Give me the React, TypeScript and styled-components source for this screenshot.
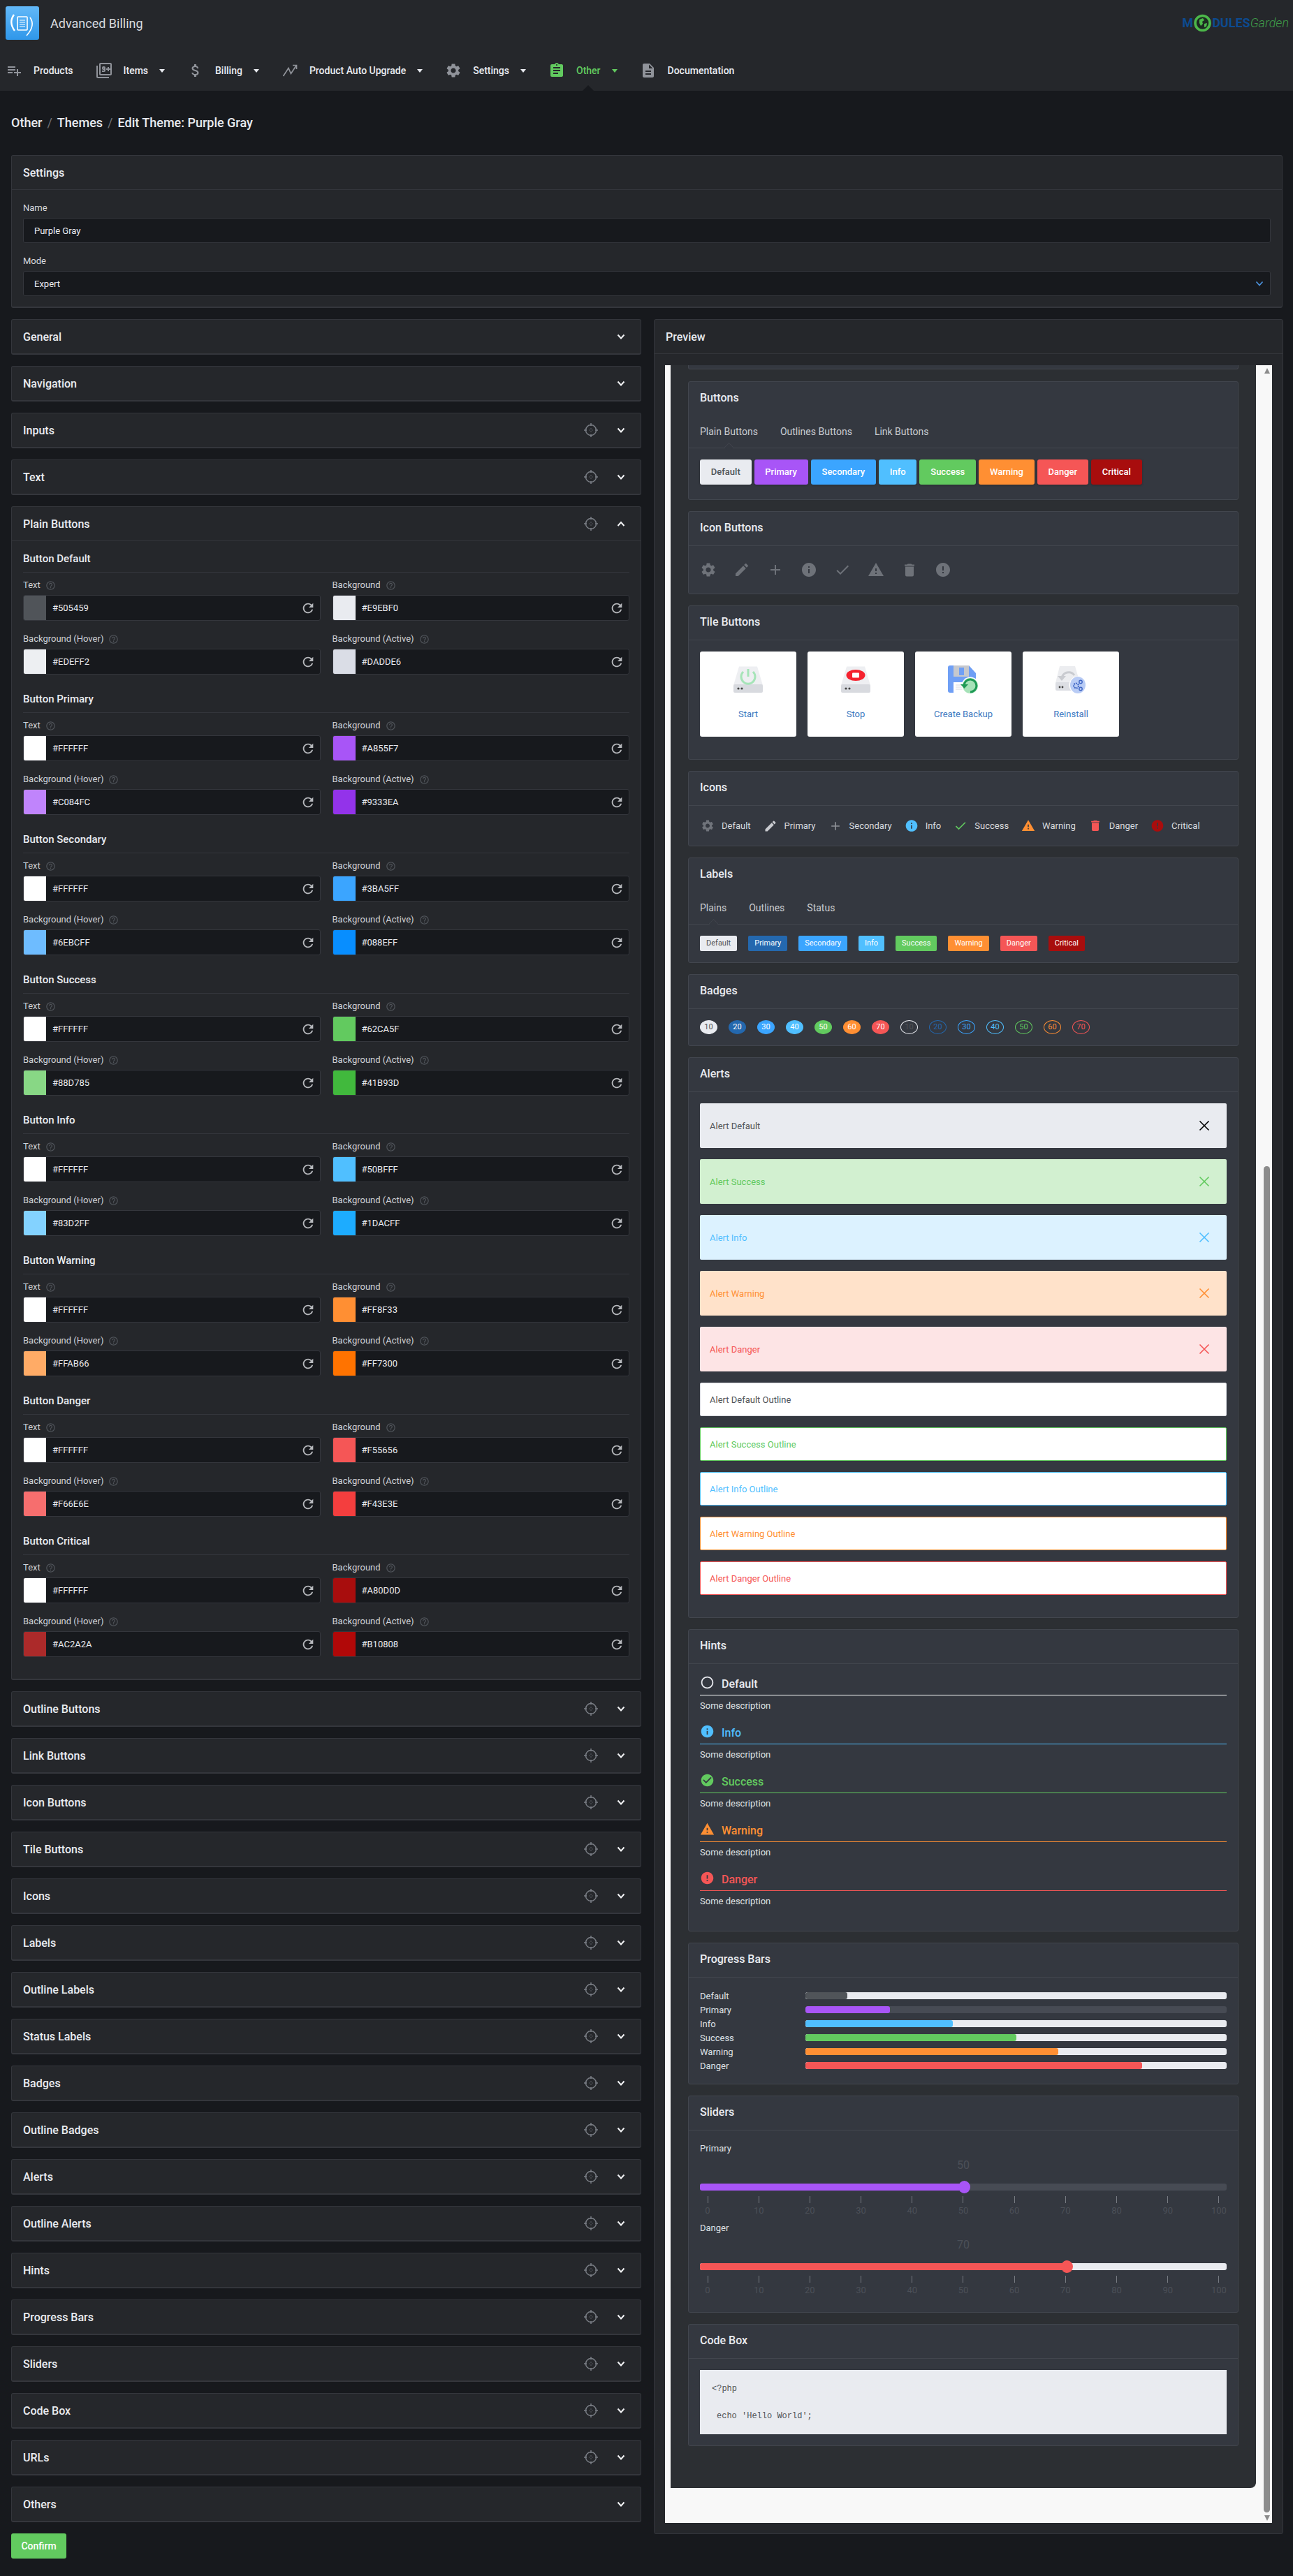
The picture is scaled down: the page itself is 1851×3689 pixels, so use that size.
import React from 'react';
import styled, { createGlobalStyle } from 'styled-components';
import {
  MdPlaylistAdd,
  MdOutlineFilter9Plus,
  MdAttachMoney,
  MdSettings,
  MdAssignment,
  MdDescription,
  MdRefresh,
  MdHelpOutline,
  MdEdit,
  MdAdd,
  MdInfo,
  MdCheck,
  MdWarning,
  MdDelete,
  MdError,
  MdCheckCircle,
  MdRadioButtonUnchecked,
} from 'react-icons/md';

const Color = {
  PAGE: '#17191d',
  PANEL: '#25272b',
  PANEL_LINE: '#34363c',
  DARK: '#2c2f33',
  CARD: '#343840',
  CARD_LINE: '#42464e',
  TEXT: '#e9ebf0',
  DEFAULT: '#e9ebf0',
  DEFAULT_TEXT: '#505459',
  PURPLE: '#a855f7',
  PRIMARY: '#2468ae',
  SECONDARY: '#3ba5ff',
  INFO: '#50bfff',
  SUCCESS: '#62ca5f',
  WARNING: '#ff8f33',
  DANGER: '#f55656',
  CRITICAL: '#a80d0d',
};

const GlobalStyle = createGlobalStyle`
  html, body {
    margin: 0;
    background: ${Color.PAGE};
    font-family: Roboto, "Liberation Sans", sans-serif;
    font-size: 13px;
    color: ${Color.TEXT};
  }
  * { box-sizing: border-box; }
`;

const UpgradeIcon = () => (
  <svg width="24" height="24" viewBox="0 0 24 24" fill="none">
    <path d="M2.500 20 10 8.500l3.500 8L21 5" stroke="currentColor" strokeWidth="1.700" />
    <path d="M16 4.500h5.500V10" stroke="currentColor" strokeWidth="1.700" />
  </svg>
);

const TargetGlyph = () => (
  <svg width="20" height="20" viewBox="0 0 20 20" fill="none" stroke="currentColor">
    <circle cx="10" cy="10" r="7.500" strokeWidth="1.500" />
    <path d="M10 0v4M10 16v4M0 10h4M16 10h4" strokeWidth="1.500" />
    <path d="M10 7.500v1M10 11.500v1M7.500 10h1M11.500 10h1" strokeWidth="1.200" />
  </svg>
);

const NAV = [
  { label: 'Products', icon: <MdPlaylistAdd size={26} />, caret: false },
  { label: 'Items', icon: <MdOutlineFilter9Plus size={26} />, caret: true },
  { label: 'Billing', icon: <MdAttachMoney size={24} />, caret: true },
  { label: 'Product Auto Upgrade', icon: <UpgradeIcon />, caret: true },
  { label: 'Settings', icon: <MdSettings size={24} />, caret: true },
  { label: 'Other', icon: <MdAssignment size={24} />, caret: true, active: true },
  { label: 'Documentation', icon: <MdDescription size={24} />, caret: false },
];

const BUTTON_GROUPS = [
  { title: 'Button Default', values: ['#505459', '#E9EBF0', '#EDEFF2', '#DADDE6'] },
  { title: 'Button Primary', values: ['#FFFFFF', '#A855F7', '#C084FC', '#9333EA'] },
  { title: 'Button Secondary', values: ['#FFFFFF', '#3BA5FF', '#6EBCFF', '#088EFF'] },
  { title: 'Button Success', values: ['#FFFFFF', '#62CA5F', '#88D785', '#41B93D'] },
  { title: 'Button Info', values: ['#FFFFFF', '#50BFFF', '#83D2FF', '#1DACFF'] },
  { title: 'Button Warning', values: ['#FFFFFF', '#FF8F33', '#FFAB66', '#FF7300'] },
  { title: 'Button Danger', values: ['#FFFFFF', '#F55656', '#F66E6E', '#F43E3E'] },
  { title: 'Button Critical', values: ['#FFFFFF', '#A80D0D', '#AC2A2A', '#B10808'] },
];

const FIELD_NAMES = ['Text', 'Background', 'Background (Hover)', 'Background (Active)'];

const PANELS_BEFORE = [
  { title: 'General', target: false },
  { title: 'Navigation', target: false },
  { title: 'Inputs', target: true },
  { title: 'Text', target: true },
];

const PANELS_AFTER = [
  'Outline Buttons',
  'Link Buttons',
  'Icon Buttons',
  'Tile Buttons',
  'Icons',
  'Labels',
  'Outline Labels',
  'Status Labels',
  'Badges',
  'Outline Badges',
  'Alerts',
  'Outline Alerts',
  'Hints',
  'Progress Bars',
  'Sliders',
  'Code Box',
  'URLs',
];

const PREVIEW_BUTTONS = [
  { label: 'Default', bg: Color.DEFAULT, fg: Color.DEFAULT_TEXT },
  { label: 'Primary', bg: Color.PURPLE, fg: '#fff' },
  { label: 'Secondary', bg: Color.SECONDARY, fg: '#fff' },
  { label: 'Info', bg: Color.INFO, fg: '#fff' },
  { label: 'Success', bg: Color.SUCCESS, fg: '#fff' },
  { label: 'Warning', bg: Color.WARNING, fg: '#fff' },
  { label: 'Danger', bg: Color.DANGER, fg: '#fff' },
  { label: 'Critical', bg: Color.CRITICAL, fg: '#fff' },
];

const PREVIEW_LABELS = [
  { label: 'Default', bg: Color.DEFAULT, fg: Color.DEFAULT_TEXT },
  { label: 'Primary', bg: Color.PRIMARY, fg: '#fff' },
  { label: 'Secondary', bg: Color.SECONDARY, fg: '#fff' },
  { label: 'Info', bg: Color.INFO, fg: '#fff' },
  { label: 'Success', bg: Color.SUCCESS, fg: '#fff' },
  { label: 'Warning', bg: Color.WARNING, fg: '#fff' },
  { label: 'Danger', bg: Color.DANGER, fg: '#fff' },
  { label: 'Critical', bg: Color.CRITICAL, fg: '#fff' },
];

const BADGES = [
  { value: 10, color: Color.DEFAULT, fg: Color.DEFAULT_TEXT },
  { value: 20, color: Color.PRIMARY, fg: '#fff' },
  { value: 30, color: Color.SECONDARY, fg: '#fff' },
  { value: 40, color: Color.INFO, fg: '#fff' },
  { value: 50, color: Color.SUCCESS, fg: '#fff' },
  { value: 60, color: Color.WARNING, fg: '#fff' },
  { value: 70, color: Color.DANGER, fg: '#fff' },
];

const OUTLINE_BADGES = [
  { value: 10, color: Color.DEFAULT, fg: Color.DEFAULT_TEXT },
  { value: 20, color: Color.PRIMARY, fg: Color.PRIMARY },
  { value: 30, color: Color.SECONDARY, fg: Color.SECONDARY },
  { value: 40, color: Color.INFO, fg: Color.INFO },
  { value: 50, color: Color.SUCCESS, fg: Color.SUCCESS },
  { value: 60, color: Color.WARNING, fg: Color.WARNING },
  { value: 70, color: Color.DANGER, fg: Color.DANGER },
];

const ALERTS = [
  { label: 'Alert Default', bg: '#e9ebf0', fg: Color.DEFAULT_TEXT, close: '#000' },
  { label: 'Alert Success', bg: '#d2f0d0', fg: Color.SUCCESS, close: Color.SUCCESS },
  { label: 'Alert Info', bg: '#dcf2ff', fg: Color.INFO, close: Color.INFO },
  { label: 'Alert Warning', bg: '#ffe2ca', fg: Color.WARNING, close: Color.WARNING },
  { label: 'Alert Danger', bg: '#fde4e5', fg: Color.DANGER, close: Color.DANGER },
];

const OUTLINE_ALERTS = [
  { label: 'Alert Default Outline', fg: Color.DEFAULT_TEXT, line: '#d6d8de' },
  { label: 'Alert Success Outline', fg: Color.SUCCESS, line: Color.SUCCESS },
  { label: 'Alert Info Outline', fg: Color.INFO, line: Color.INFO },
  { label: 'Alert Warning Outline', fg: Color.WARNING, line: Color.WARNING },
  { label: 'Alert Danger Outline', fg: Color.DANGER, line: Color.DANGER },
];

const HINTS = [
  { label: 'Default', color: '#e9ebf0', line: '#ffffff', icon: <MdRadioButtonUnchecked size={21} /> },
  { label: 'Info', color: Color.INFO, line: Color.INFO, icon: <MdInfo size={21} /> },
  { label: 'Success', color: Color.SUCCESS, line: Color.SUCCESS, icon: <MdCheckCircle size={21} /> },
  { label: 'Warning', color: Color.WARNING, line: Color.WARNING, icon: <MdWarning size={21} /> },
  { label: 'Danger', color: Color.DANGER, line: Color.DANGER, icon: <MdError size={21} /> },
];

const PROGRESS = [
  { label: 'Default', value: 10, color: Color.DEFAULT_TEXT, track: Color.DEFAULT },
  { label: 'Primary', value: 20, color: Color.PURPLE, track: '#474b54' },
  { label: 'Info', value: 35, color: Color.INFO, track: Color.DEFAULT },
  { label: 'Success', value: 50, color: Color.SUCCESS, track: Color.DEFAULT },
  { label: 'Warning', value: 60, color: Color.WARNING, track: Color.DEFAULT },
  { label: 'Danger', value: 80, color: Color.DANGER, track: Color.DEFAULT },
];

const SLIDERS = [
  { label: 'Primary', value: 50, color: Color.PURPLE, track: '#474b54' },
  { label: 'Danger', value: 70, color: Color.DANGER, track: Color.DEFAULT },
];

const TICKS = [0, 10, 20, 30, 40, 50, 60, 70, 80, 90, 100];

const Chevron = ({ up }: { up?: boolean }) => (
  <svg width="14" height="10" viewBox="0 0 14 10" fill="none">
    <path
      d={up ? 'M2.5 8 7 3l4.5 5' : 'M2.5 2.5 7 7.5l4.5-5'}
      stroke="#f2f3f5"
      strokeWidth="2"
    />
  </svg>
);

const CloseIcon = ({ color }: { color: string }) => (
  <svg width="16" height="16" viewBox="0 0 16 16" fill="none">
    <path d="M1.5 1.5l13 13M14.5 1.5l-13 13" stroke={color} strokeWidth="1.6" />
  </svg>
);

const AppLogo = () => (
  <svg width="48" height="48" viewBox="0 0 48 48">
    <defs>
      <linearGradient id="appLogo" x1="0" y1="0" x2="0" y2="1">
        <stop offset="0" stopColor="#62b8f8" />
        <stop offset="1" stopColor="#2f97ea" />
      </linearGradient>
    </defs>
    <rect width="48" height="48" rx="3" fill="url(#appLogo)" />
    <rect x="17" y="15" width="14" height="19" rx="1" fill="none" stroke="#fff" strokeWidth="1.6" />
    <path d="M20 20h8M20 23h8M20 26h8M20 29h8" stroke="#fff" strokeWidth="1.2" />
    <path d="M12 12c-5 7-5 15 1 23" fill="none" stroke="#fff" strokeWidth="2.4" />
    <path d="M35 16c5 7 5 15-5 26" fill="none" stroke="#fff" strokeWidth="1.6" />
  </svg>
);

const BrandGlobe = () => (
  <svg width="27" height="26" viewBox="0 0 27 26">
    <circle cx="13.5" cy="13" r="10.5" fill="#1d2a22" stroke="#4cb84a" strokeWidth="3.6" />
    <path d="M9 8l5-2 2 3-3 2 1 3-3 3-2-4zM16 14l4-1-1 5-3 1z" fill="#4cb84a" />
  </svg>
);

const DiskBody = ({ children }: { children?: React.ReactNode }) => (
  <>
    <path d="M9 1.5h26l8 27H1z" fill="#eeeff2" />
    <rect x="1" y="27" width="42" height="12" rx="2" fill="#d8dadf" />
    <circle cx="8" cy="33" r="1.6" fill="#444" />
    <circle cx="13" cy="33" r="1.6" fill="#444" />
    {children}
  </>
);

const StartIcon = () => (
  <svg width="44" height="40" viewBox="0 0 44 40">
    <DiskBody>
      <path d="M15 9a10 10 0 1 0 14 0" fill="none" stroke="#a6e4b8" strokeWidth="3" />
      <path d="M22 5v11" stroke="#a6e4b8" strokeWidth="3" />
    </DiskBody>
  </svg>
);

const StopIcon = () => (
  <svg width="44" height="40" viewBox="0 0 44 40">
    <DiskBody>
      <ellipse cx="22" cy="14" rx="13.5" ry="8" fill="#f5222f" />
      <rect x="17" y="10.5" width="10" height="7" rx="1" fill="#fff" />
    </DiskBody>
  </svg>
);

const BackupIcon = () => (
  <svg width="44" height="42" viewBox="0 0 44 42">
    <path d="M0 3a3 3 0 0 1 3-3h27l10 11v25a3 3 0 0 1-3 3H3a3 3 0 0 1-3-3z" fill="#6f9ff5" />
    <rect x="8" y="0" width="22" height="16" fill="#c6c8cd" />
    <rect x="16" y="3" width="7" height="11" fill="#6f9ff5" />
    <rect x="8" y="24" width="22" height="15" fill="#fff" />
    <path d="M11 28h10M11 31h10M11 34h10" stroke="#d5d8de" strokeWidth="1" />
    <circle cx="32" cy="29" r="12.5" fill="#fff" />
    <circle cx="32" cy="29" r="11" fill="#a6e2b8" />
    <path d="M23 28a9 9 0 1 1 9 10" fill="none" stroke="#1f9a55" strokeWidth="3" />
    <path d="M18 27h11l-5.500 6z" fill="#1f9a55" />
  </svg>
);

const ReinstallIcon = () => (
  <svg width="44" height="42" viewBox="0 0 44 42">
    <path d="M6 1h22l7 24H0z" fill="#ecedf0" />
    <rect x="0" y="24" width="32" height="12" rx="2" fill="#dcdee3" />
    <circle cx="6" cy="31" r="1.4" fill="#444" />
    <circle cx="10" cy="31" r="1.4" fill="#444" />
    <path d="M9 18a10 10 0 0 1 18-4" fill="none" stroke="#c9cbd0" strokeWidth="3" />
    <path d="M3 15h12l-6 7z" fill="#c9cbd0" />
    <circle cx="32" cy="28" r="12.5" fill="#fff" />
    <ellipse cx="32" cy="28" rx="11" ry="12" fill="#b9ccf5" />
    <circle cx="29.500" cy="29" r="3.400" fill="none" stroke="#3f66c4" strokeWidth="2" strokeDasharray="2 1" />
    <circle cx="36" cy="23.500" r="2.200" fill="none" stroke="#3f66c4" strokeWidth="1.400" />
    <circle cx="36" cy="33.500" r="2.200" fill="none" stroke="#3f66c4" strokeWidth="1.400" />
  </svg>
);

const TILES = [
  { label: 'Start', icon: <StartIcon /> },
  { label: 'Stop', icon: <StopIcon /> },
  { label: 'Create Backup', icon: <BackupIcon /> },
  { label: 'Reinstall', icon: <ReinstallIcon /> },
];

const ICON_BUTTONS = [
  <MdSettings size={24} />,
  <MdEdit size={24} />,
  <MdAdd size={26} />,
  <MdInfo size={24} />,
  <MdCheck size={24} />,
  <MdWarning size={24} />,
  <MdDelete size={25} />,
  <MdError size={24} />,
];

const ICON_ROW = [
  { label: 'Default', color: '#70747b', icon: <MdSettings size={25} /> },
  { label: 'Primary', color: '#c9cbd0', icon: <MdEdit size={24} /> },
  { label: 'Secondary', color: '#8d9096', icon: <MdAdd size={26} /> },
  { label: 'Info', color: Color.INFO, icon: <MdInfo size={25} /> },
  { label: 'Success', color: Color.SUCCESS, icon: <MdCheck size={25} /> },
  { label: 'Warning', color: Color.WARNING, icon: <MdWarning size={25} /> },
  { label: 'Danger', color: Color.DANGER, icon: <MdDelete size={25} /> },
  { label: 'Critical', color: Color.CRITICAL, icon: <MdError size={25} /> },
];

const PanelBar = ({ title, target, up }: { title: string; target?: boolean; up?: boolean }) => (
  <PanelHead>
    <PanelTitle>{title}</PanelTitle>
    {target && (
      <TargetIcon>
        <TargetGlyph />
      </TargetIcon>
    )}
    <ChevronSlot>
      <Chevron up={up} />
    </ChevronSlot>
  </PanelHead>
);

const ColorField = ({ name, value }: { name: string; value: string }) => (
  <Field>
    <FieldLabel>
      {name}
      <HelpIcon>
        <MdHelpOutline size={15} />
      </HelpIcon>
    </FieldLabel>
    <ColorBox>
      <Swatch $color={value} />
      <ColorValue>{value}</ColorValue>
      <ResetIcon>
        <MdRefresh size={22} />
      </ResetIcon>
    </ColorBox>
  </Field>
);

export default function App() {
  return (
    <>
      <GlobalStyle />
      <Header>
        <TopBar>
          <AppLogo />
          <AppName>Advanced Billing</AppName>
          <Brand>
            <BrandBold>M</BrandBold>
            <BrandGlobe />
            <BrandBold>DULES</BrandBold>
            <BrandLight>Garden</BrandLight>
          </Brand>
        </TopBar>
        <Nav>
          {NAV.map((item) => (
            <NavItem key={item.label} $active={item.active}>
              <NavIcon $active={item.active}>{item.icon}</NavIcon>
              <NavLabel $active={item.active}>{item.label}</NavLabel>
              {item.caret && <Caret $active={item.active} />}
            </NavItem>
          ))}
        </Nav>
      </Header>

      <Main>
        <Breadcrumb>
          <span>Other</span>
          <Separator>/</Separator>
          <span>Themes</span>
          <Separator>/</Separator>
          <span>Edit Theme: Purple Gray</span>
        </Breadcrumb>

        <Panel>
          <PanelHead $line>
            <PanelTitle>Settings</PanelTitle>
          </PanelHead>
          <SettingsBody>
            <FormLabel>Name</FormLabel>
            <TextBox>Purple Gray</TextBox>
            <FormLabel>Mode</FormLabel>
            <SelectBox>
              Expert
              <svg width="12" height="8" viewBox="0 0 12 8" fill="none">
                <path d="M1.500 1.500 6 6.500l4.500-5" stroke="#4a8fd8" strokeWidth="1.800" />
              </svg>
            </SelectBox>
          </SettingsBody>
        </Panel>

        <Columns>
          <div>
            {PANELS_BEFORE.map((panel) => (
              <Panel key={panel.title}>
                <PanelBar title={panel.title} target={panel.target} />
              </Panel>
            ))}
            <Panel>
              <PanelHead $line>
                <PanelTitle>Plain Buttons</PanelTitle>
                <TargetIcon>
                  <TargetGlyph />
                </TargetIcon>
                <ChevronSlot>
                  <Chevron up />
                </ChevronSlot>
              </PanelHead>
              <GroupsBody>
                {BUTTON_GROUPS.map((group) => (
                  <Group key={group.title}>
                    <GroupTitle>{group.title}</GroupTitle>
                    <FieldGrid>
                      {group.values.map((value, index) => (
                        <ColorField key={FIELD_NAMES[index]} name={FIELD_NAMES[index]} value={value} />
                      ))}
                    </FieldGrid>
                  </Group>
                ))}
              </GroupsBody>
            </Panel>
            {PANELS_AFTER.map((title) => (
              <Panel key={title}>
                <PanelBar title={title} target />
              </Panel>
            ))}
            <Panel>
              <PanelBar title="Others" />
            </Panel>
            <ConfirmButton>Confirm</ConfirmButton>
          </div>

          <PreviewPanel>
            <PanelHead $line>
              <PanelTitle>Preview</PanelTitle>
            </PanelHead>
            <PreviewBody>
              <Frame>
                <FrameContent>
                  <ClippedCard />

                  <Card>
                    <CardTitle>Buttons</CardTitle>
                    <TabBar>
                      <Tab $active>Plain Buttons</Tab>
                      <Tab>Outlines Buttons</Tab>
                      <Tab>Link Buttons</Tab>
                    </TabBar>
                    <ButtonRow>
                      {PREVIEW_BUTTONS.map((button) => (
                        <PlainButton key={button.label} $bg={button.bg} $fg={button.fg}>
                          {button.label}
                        </PlainButton>
                      ))}
                    </ButtonRow>
                  </Card>

                  <Card>
                    <CardHead>Icon Buttons</CardHead>
                    <IconButtonRow>
                      {ICON_BUTTONS.map((icon, index) => (
                        <IconButton key={index}>{icon}</IconButton>
                      ))}
                    </IconButtonRow>
                  </Card>

                  <Card>
                    <CardHead>Tile Buttons</CardHead>
                    <TileRow>
                      {TILES.map((tile) => (
                        <Tile key={tile.label}>
                          <TileIcon>{tile.icon}</TileIcon>
                          <TileLabel>{tile.label}</TileLabel>
                        </Tile>
                      ))}
                    </TileRow>
                  </Card>

                  <Card>
                    <CardHead>Icons</CardHead>
                    <IconRow>
                      {ICON_ROW.map((item) => (
                        <IconEntry key={item.label}>
                          <IconGlyph $color={item.color}>{item.icon}</IconGlyph>
                          {item.label}
                        </IconEntry>
                      ))}
                    </IconRow>
                  </Card>

                  <Card>
                    <CardTitle>Labels</CardTitle>
                    <TabBar>
                      <Tab $active>Plains</Tab>
                      <Tab>Outlines</Tab>
                      <Tab>Status</Tab>
                    </TabBar>
                    <LabelRow>
                      {PREVIEW_LABELS.map((label) => (
                        <PlainLabel key={label.label} $bg={label.bg} $fg={label.fg}>
                          {label.label}
                        </PlainLabel>
                      ))}
                    </LabelRow>
                  </Card>

                  <Card>
                    <CardHead>Badges</CardHead>
                    <BadgeRow>
                      {BADGES.map((badge) => (
                        <Badge key={badge.value} $bg={badge.color} $fg={badge.fg} $line={badge.color}>
                          {badge.value}
                        </Badge>
                      ))}
                      {OUTLINE_BADGES.map((badge) => (
                        <Badge key={badge.value} $bg="transparent" $fg={badge.fg} $line={badge.color}>
                          {badge.value}
                        </Badge>
                      ))}
                    </BadgeRow>
                  </Card>

                  <Card>
                    <CardHead>Alerts</CardHead>
                    <AlertList>
                      {ALERTS.map((alert) => (
                        <Alert key={alert.label} $bg={alert.bg} $fg={alert.fg}>
                          {alert.label}
                          <CloseIcon color={alert.close} />
                        </Alert>
                      ))}
                      {OUTLINE_ALERTS.map((alert) => (
                        <OutlineAlert key={alert.label} $fg={alert.fg} $line={alert.line}>
                          {alert.label}
                        </OutlineAlert>
                      ))}
                    </AlertList>
                  </Card>

                  <Card>
                    <CardHead>Hints</CardHead>
                    <HintList>
                      {HINTS.map((hint) => (
                        <div key={hint.label}>
                          <HintTitle $color={hint.color} $line={hint.line}>
                            {hint.icon}
                            <span>{hint.label}</span>
                          </HintTitle>
                          <HintText>Some description</HintText>
                        </div>
                      ))}
                    </HintList>
                  </Card>

                  <Card>
                    <CardHead>Progress Bars</CardHead>
                    <CardBody>
                      {PROGRESS.map((bar) => (
                        <ProgressRow key={bar.label}>
                          <span>{bar.label}</span>
                          <ProgressTrack $track={bar.track}>
                            <ProgressFill $color={bar.color} style={{ width: `${bar.value}%` }} />
                          </ProgressTrack>
                        </ProgressRow>
                      ))}
                    </CardBody>
                  </Card>

                  <Card>
                    <CardHead>Sliders</CardHead>
                    <CardBody>
                      {SLIDERS.map((slider) => {
                        const offset = 11 + (slider.value / 100) * 734;
                        return (
                          <SliderBlock key={slider.label}>
                            <SliderLabel>{slider.label}</SliderLabel>
                            <SliderValue>{slider.value}</SliderValue>
                            <SliderTrack $track={slider.track}>
                              <SliderFill $color={slider.color} style={{ width: offset }} />
                              <SliderThumb $color={slider.color} style={{ left: offset }} />
                            </SliderTrack>
                            <TickRow>
                              {TICKS.map((tick) => (
                                <Tick key={tick}>
                                  <TickLine />
                                  <TickNumber>{tick}</TickNumber>
                                </Tick>
                              ))}
                            </TickRow>
                          </SliderBlock>
                        );
                      })}
                    </CardBody>
                  </Card>

                  <LastCard>
                    <CardHead>Code Box</CardHead>
                    <CardBody>
                      <CodeBox>
                        <CodeLine>{'<?php'}</CodeLine>
                        <CodeLine $indent>{"echo 'Hello World';"}</CodeLine>
                      </CodeBox>
                    </CardBody>
                  </LastCard>
                </FrameContent>
                <ScrollTrack>
                  <ScrollArrow />
                  <ScrollThumb />
                  <ScrollArrow $down />
                </ScrollTrack>
              </Frame>
            </PreviewBody>
          </PreviewPanel>
        </Columns>
      </Main>
    </>
  );
}

const Header = styled.header`
  background: ${Color.PANEL};
  height: 130px;
`;

const TopBar = styled.div`
  display: flex;
  align-items: center;
  height: 72px;
  padding: 0 6px 6px 8px;
`;

const AppName = styled.div`
  margin-left: 16px;
  font-size: 18px;
  color: #d8dade;
`;

const Brand = styled.div`
  display: flex;
  align-items: center;
  margin-left: auto;
  font-size: 18px;
  line-height: 26px;
`;

const BrandBold = styled.span`
  font-weight: 700;
  color: #0d4a8f;
`;

const BrandLight = styled.span`
  font-weight: 300;
  font-style: italic;
  color: #3f9c49;
`;

const Nav = styled.nav`
  display: flex;
  height: 58px;
  padding-left: 8px;
`;

const NavItem = styled.div<{ $active?: boolean }>`
  display: flex;
  align-items: center;
  margin-right: 32px;
`;

const NavIcon = styled.span<{ $active?: boolean }>`
  display: flex;
  justify-content: center;
  width: 24px;
  margin-right: 16px;
  color: ${(props) => (props.$active ? Color.SUCCESS : '#90939a')};
`;

const NavLabel = styled.span<{ $active?: boolean }>`
  position: relative;
  font-size: 14px;
  font-weight: 500;
  line-height: 20px;
  color: ${(props) => (props.$active ? Color.SUCCESS : Color.TEXT)};

  ${(props) =>
    props.$active &&
    `&::after {
      content: '';
      position: absolute;
      left: 50%;
      bottom: -19px;
      margin-left: -8px;
      border: 8px solid transparent;
      border-top: 0;
      border-bottom-color: ${Color.PAGE};
    }`}
`;

const Caret = styled.span<{ $active?: boolean }>`
  width: 0;
  height: 0;
  margin-left: 16px;
  border: 4px solid transparent;
  border-bottom: 0;
  border-top: 5px solid ${(props) => (props.$active ? Color.SUCCESS : Color.TEXT)};
`;

const Main = styled.main`
  padding: 0 15px 23px 16px;
`;

const Breadcrumb = styled.div`
  padding: 34px 0;
  font-size: 18px;
  font-weight: 500;
  line-height: 24px;
`;

const Separator = styled.span`
  margin: 0 7px;
  font-weight: 400;
  color: #6f7277;
`;

const Panel = styled.section`
  margin-bottom: 16px;
  background: ${Color.PANEL};
  border: 1px solid ${Color.PANEL_LINE};
  border-bottom-width: 2px;
  border-radius: 3px;
`;

const PanelHead = styled.div<{ $line?: boolean }>`
  display: flex;
  align-items: center;
  height: ${(props) => (props.$line ? '49px' : '48px')};
  padding: 0 16px;
  ${(props) => props.$line && `border-bottom: 1px solid ${Color.PANEL_LINE};`}
`;

const PanelTitle = styled.h2`
  margin: 0;
  flex: 1;
  font-size: 16px;
  font-weight: 500;
  color: ${Color.TEXT};
`;

const TargetIcon = styled.span`
  display: flex;
  margin-right: 26px;
  color: #7a7e85;
`;

const ChevronSlot = styled.span`
  display: flex;
  margin-right: 5px;
`;

const SettingsBody = styled.div`
  padding: 16px 16px 15px;
`;

const FormLabel = styled.div`
  height: 24px;
  line-height: 20px;
  font-size: 13px;
  color: #d8dade;
`;

const TextBox = styled.div`
  display: flex;
  align-items: center;
  justify-content: space-between;
  height: 36px;
  margin-bottom: 16px;
  padding: 0 15px;
  background: ${Color.PAGE};
  border: 1px solid ${Color.PANEL_LINE};
  border-radius: 3px;
  font-size: 13px;
  color: ${Color.TEXT};
`;

const SelectBox = styled(TextBox)`
  margin-bottom: 0;
  padding-right: 9px;
`;

const Columns = styled.div`
  display: grid;
  grid-template-columns: 902px 1fr;
  column-gap: 18px;
`;

const GroupsBody = styled.div`
  padding: 15px 16px 15px;
`;

const Group = styled.div`
  & + & {
    margin-top: 9px;
  }
`;

const GroupTitle = styled.h3`
  margin: 0 0 8px;
  padding-bottom: 9px;
  border-bottom: 1px solid ${Color.PANEL_LINE};
  font-size: 15px;
  font-weight: 500;
  line-height: 20px;
  color: ${Color.TEXT};
`;

const FieldGrid = styled.div`
  display: grid;
  grid-template-columns: 1fr 1fr;
  column-gap: 17px;
  padding-bottom: 16px;
`;

const Field = styled.div`
  margin-bottom: 16px;

  &:nth-last-child(-n + 2) {
    margin-bottom: 0;
  }
`;

const FieldLabel = styled.label`
  display: flex;
  align-items: flex-start;
  height: 24px;
  line-height: 20px;
  font-size: 13px;
  color: #cfd1d6;
`;

const HelpIcon = styled.span`
  display: flex;
  margin: 3px 0 0 7px;
  color: #4f5359;
`;

const ColorBox = styled.div`
  display: flex;
  align-items: center;
  height: 37px;
  background: ${Color.PAGE};
  border: 1px solid ${Color.PANEL_LINE};
  border-radius: 3px;
`;

const Swatch = styled.span<{ $color: string }>`
  align-self: stretch;
  width: 32px;
  background: ${(props) => props.$color};
  border-radius: 2px 0 0 2px;
`;

const ColorValue = styled.span`
  flex: 1;
  padding-left: 9px;
  font-size: 13px;
  color: ${Color.TEXT};
`;

const ResetIcon = styled.span`
  display: flex;
  margin-right: 6px;
  color: #b7b9bd;
`;

const ConfirmButton = styled.button`
  display: block;
  width: 79px;
  height: 36px;
  padding: 0;
  border: 0;
  border-radius: 3px;
  background: ${Color.SUCCESS};
  color: #fff;
  font-family: inherit;
  font-size: 14px;
  font-weight: 500;
`;

const PreviewPanel = styled(Panel)`
  margin-bottom: 0;
  height: 3172px;
  border-bottom-width: 1px;
`;

const PreviewBody = styled.div`
  padding: 16px 15px 16px 15px;
`;

const Frame = styled.div`
  display: flex;
  height: 3090px;
  padding-left: 8px;
  background: #f8f8f8;
`;

const FrameContent = styled.div`
  width: 838px;
  height: 3040px;
  padding: 0 25px;
  background: ${Color.DARK};
  border-radius: 0 0 8px 0;
`;

const ScrollTrack = styled.div`
  display: flex;
  flex-direction: column;
  align-items: center;
  width: 23px;
  padding: 4px 3px 3px 11px;
`;

const ScrollArrow = styled.span<{ $down?: boolean }>`
  width: 0;
  height: 0;
  margin: ${(props) => (props.$down ? '4px 0 0' : '0')};
  border: 4px solid transparent;
  ${(props) =>
    props.$down ? 'border-bottom: 0; border-top: 8px solid #8c8c8c;' : 'border-top: 0; border-bottom: 8px solid #8c8c8c;'}
`;

const ScrollThumb = styled.span`
  flex: 1;
  width: 9px;
  margin-top: 1135px;
  background: #8c8c8c;
  border-radius: 5px;
`;

const ClippedCard = styled.div`
  height: 6px;
  margin-bottom: 17px;
  background: ${Color.CARD};
  border: 1px solid ${Color.CARD_LINE};
  border-top: 0;
  border-radius: 0 0 3px 3px;
`;

const Card = styled.section`
  margin-bottom: 16px;
  background: ${Color.CARD};
  border: 1px solid ${Color.CARD_LINE};
  border-radius: 3px;
`;

const LastCard = styled(Card)`
  margin-bottom: 0;
`;

const CardTitle = styled.h3`
  margin: 0;
  height: 48px;
  padding: 0 16px;
  font-size: 16px;
  font-weight: 500;
  line-height: 46px;
  color: ${Color.TEXT};
`;

const CardHead = styled(CardTitle)`
  height: 49px;
  border-bottom: 1px solid ${Color.CARD_LINE};
`;

const CardBody = styled.div`
  padding: 16px;
`;

const TabBar = styled.div`
  display: flex;
  gap: 32px;
  height: 47px;
  padding: 0 16px;
  border-bottom: 1px solid ${Color.CARD_LINE};
  line-height: 46px;
`;

const Tab = styled.span<{ $active?: boolean }>`
  position: relative;
  font-size: 14px;
  color: #c9ccd1;

  ${(props) =>
    props.$active &&
    `&::after {
      content: '';
      position: absolute;
      left: 50%;
      bottom: -5px;
      width: 10px;
      height: 10px;
      margin-left: -5px;
      background: ${Color.CARD};
      border-top: 1px solid ${Color.CARD_LINE};
      border-left: 1px solid ${Color.CARD_LINE};
      transform: rotate(45deg) scale(0.85);
    }`}
`;

const ButtonRow = styled.div`
  display: flex;
  gap: 4px;
  padding: 16px 16px 21px;
`;

const PlainButton = styled.span<{ $bg: string; $fg: string }>`
  height: 36px;
  padding: 0 15.8px;
  border-radius: 3px;
  background: ${(props) => props.$bg};
  color: ${(props) => props.$fg};
  box-shadow: 0 1px 3px rgba(0, 0, 0, 0.25);
  font-size: 13px;
  font-weight: 500;
  line-height: 36px;
`;

const IconButtonRow = styled.div`
  display: flex;
  gap: 24px;
  height: 68px;
  align-items: center;
  padding: 0 16px;
`;

const IconButton = styled.span`
  display: flex;
  justify-content: center;
  width: 24px;
  color: #6e7279;
`;

const TileRow = styled.div`
  display: flex;
  gap: 16px;
  padding: 16px 16px 32px;
`;

const Tile = styled.div`
  width: 138px;
  height: 122px;
  padding-top: 20px;
  background: #fff;
  border-radius: 3px;
  text-align: center;
`;

const TileIcon = styled.div`
  display: flex;
  justify-content: center;
  height: 42px;
`;

const TileLabel = styled.div`
  margin-top: 18px;
  font-size: 13px;
  line-height: 20px;
  color: #3d78c0;
`;

const IconRow = styled.div`
  display: flex;
  align-items: center;
  gap: 18px;
  height: 57px;
  padding: 0 16px 0 17px;
`;

const IconEntry = styled.span`
  display: flex;
  align-items: center;
  gap: 10px;
  font-size: 13px;
  color: #d8dade;
`;

const IconGlyph = styled.span<{ $color: string }>`
  display: flex;
  justify-content: center;
  width: 20px;
  color: ${(props) => props.$color};
`;

const LabelRow = styled.div`
  display: flex;
  gap: 16px;
  padding: 16px;
`;

const PlainLabel = styled.span<{ $bg: string; $fg: string }>`
  height: 22px;
  padding: 0 9px;
  border-radius: 2px;
  background: ${(props) => props.$bg};
  color: ${(props) => props.$fg};
  font-size: 11px;
  line-height: 22px;
`;

const BadgeRow = styled.div`
  display: flex;
  gap: 16px;
  padding: 16px;
`;

const Badge = styled.span<{ $bg: string; $fg: string; $line: string }>`
  width: 25px;
  height: 20px;
  border: 1px solid ${(props) => props.$line};
  border-radius: 50%;
  background: ${(props) => props.$bg};
  color: ${(props) => props.$fg};
  font-size: 11px;
  line-height: 18px;
  text-align: center;
`;

const AlertList = styled.div`
  display: flex;
  flex-direction: column;
  gap: 16px;
  padding: 16px 16px 32px;
`;

const Alert = styled.div<{ $bg: string; $fg: string }>`
  display: flex;
  align-items: center;
  justify-content: space-between;
  height: 64px;
  padding: 0 24px 0 14px;
  border-radius: 2px;
  background: ${(props) => props.$bg};
  color: ${(props) => props.$fg};
  font-size: 13px;
`;

const OutlineAlert = styled.div<{ $fg: string; $line: string }>`
  display: flex;
  align-items: center;
  height: 48px;
  padding: 0 13px;
  border: 1px solid ${(props) => props.$line};
  border-radius: 2px;
  background: #fff;
  color: ${(props) => props.$fg};
  font-size: 13px;
`;

const HintList = styled.div`
  padding: 15px 16px 17px;
`;

const HintTitle = styled.div<{ $color: string; $line: string }>`
  display: flex;
  align-items: center;
  gap: 10px;
  height: 30px;
  padding-bottom: 2px;
  border-bottom: 1px solid ${(props) => props.$line};
  color: ${(props) => props.$color};

  span {
    font-size: 16px;
    font-weight: 500;
  }

  svg {
    margin-top: -4px;
  }
`;

const HintText = styled.p`
  margin: 0 0 10px;
  padding-top: 5px;
  height: 30px;
  font-size: 13px;
  line-height: 20px;
  color: #dfe1e5;
`;

const ProgressRow = styled.div`
  display: flex;
  align-items: center;
  height: 20px;
  font-size: 13px;
  color: #dfe1e5;

  span {
    width: 151px;
  }
`;

const ProgressTrack = styled.div<{ $track: string }>`
  flex: 1;
  height: 10px;
  overflow: hidden;
  border-radius: 3px;
  background: ${(props) => props.$track};
`;

const ProgressFill = styled.div<{ $color: string }>`
  height: 100%;
  border-radius: 3px;
  background: ${(props) => props.$color};
`;

const SliderBlock = styled.div`
  height: 114px;
`;

const SliderLabel = styled.div`
  height: 20px;
  line-height: 20px;
  font-size: 13px;
  color: #dfe1e5;
`;

const SliderValue = styled.div`
  height: 28px;
  padding-left: 0;
  text-align: center;
  font-size: 16px;
  line-height: 28px;
  color: #4c5058;
`;

const SliderTrack = styled.div<{ $track: string }>`
  position: relative;
  height: 10px;
  margin-top: 12px;
  border-radius: 3px;
  background: ${(props) => props.$track};
`;

const SliderFill = styled.div<{ $color: string }>`
  height: 100%;
  border-radius: 3px;
  background: ${(props) => props.$color};
`;

const SliderThumb = styled.span<{ $color: string }>`
  position: absolute;
  top: -4px;
  width: 17px;
  height: 18px;
  margin-left: -8px;
  border-radius: 50%;
  background: ${(props) => props.$color};
`;

const TickRow = styled.div`
  display: flex;
  justify-content: space-between;
  margin-top: 8px;
  padding: 0 11px;
`;

const Tick = styled.div`
  display: flex;
  flex-direction: column;
  align-items: center;
  width: 0;
`;

const TickLine = styled.span`
  flex: none;
  width: 1px;
  height: 10px;
  background: #787c83;
`;

const TickNumber = styled.span`
  margin-top: 3px;
  font-size: 13px;
  line-height: 15px;
  color: #4c5058;
`;

const CodeBox = styled.div`
  height: 92px;
  padding: 17px 17px 0;
  background: ${Color.DEFAULT};
  font-family: "Liberation Mono", monospace;
  font-size: 12px;
  color: ${Color.DEFAULT_TEXT};
`;

const CodeLine = styled.div<{ $indent?: boolean }>`
  height: 39px;
  line-height: 20px;
  padding-left: ${(props) => (props.$indent ? '7px' : '0')};
`;
